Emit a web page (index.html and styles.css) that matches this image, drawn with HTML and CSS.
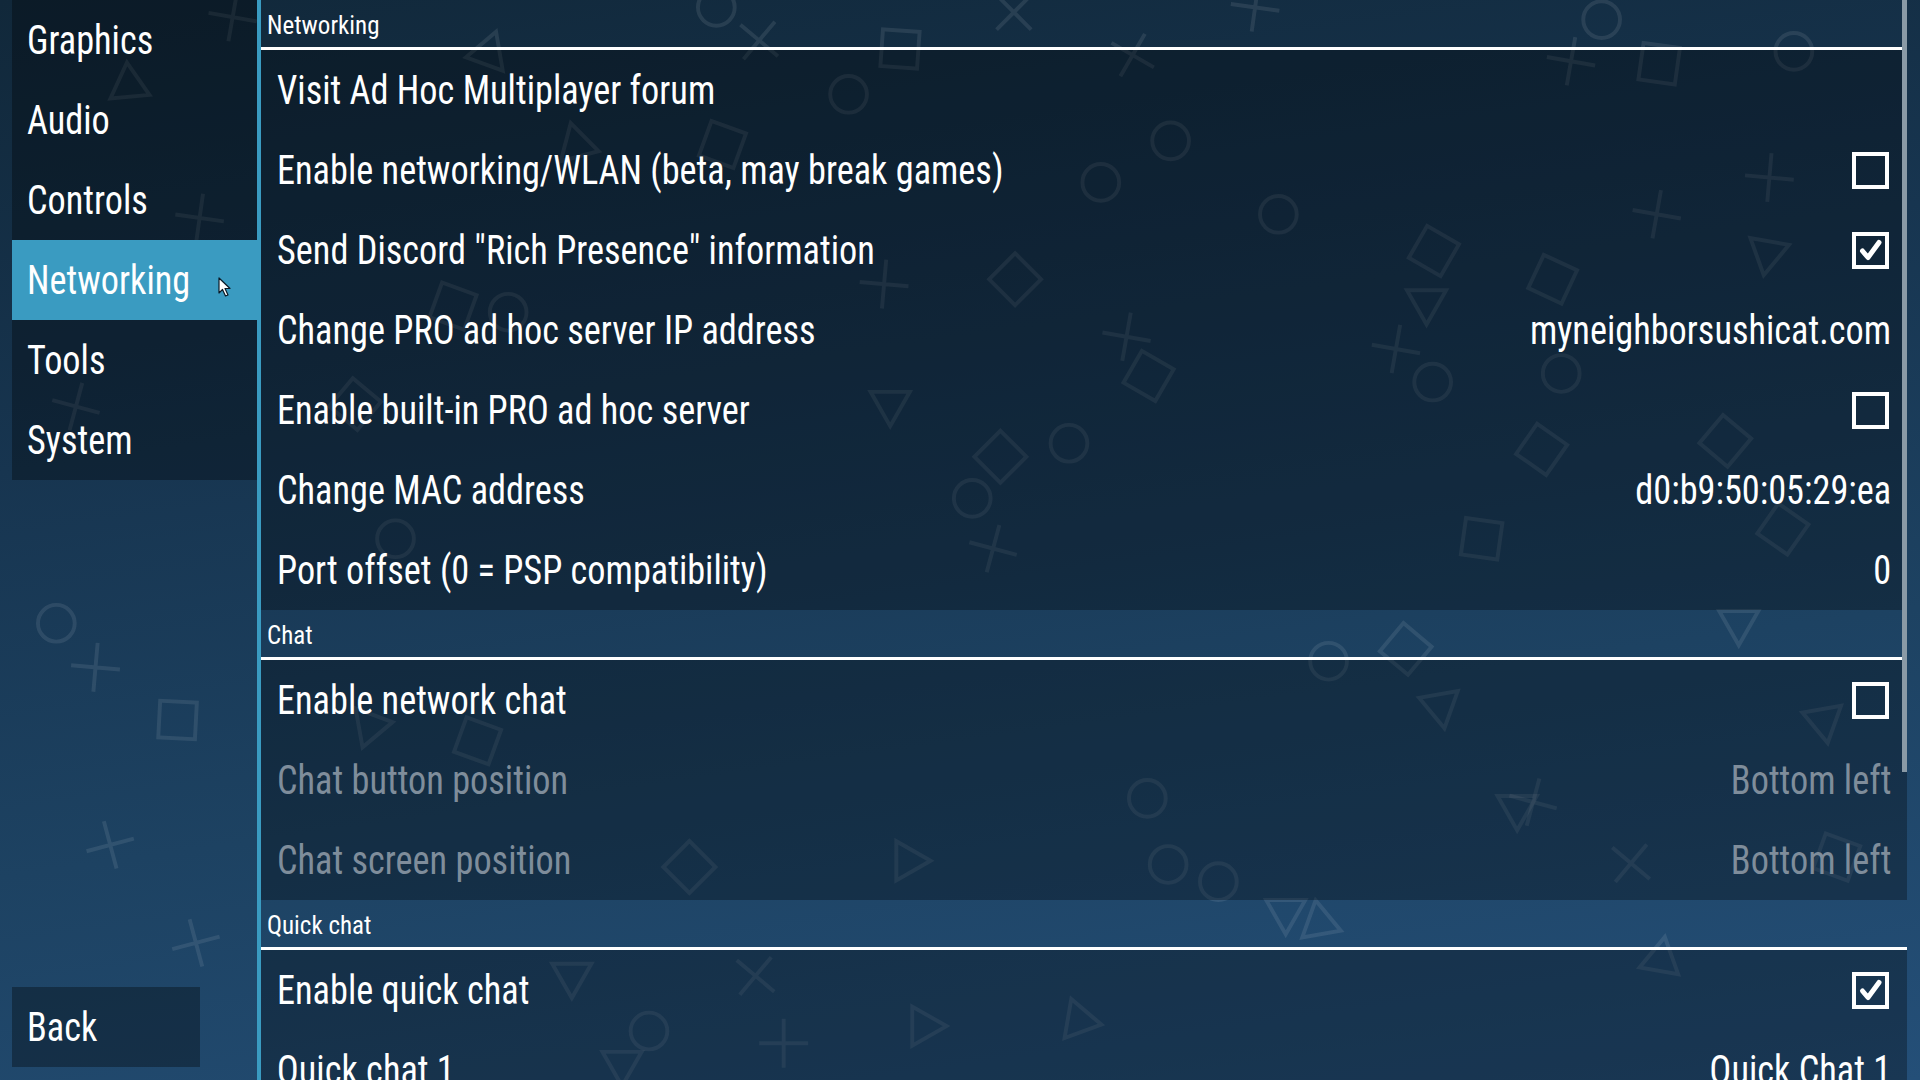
FILE: index.html
```html
<!DOCTYPE html>
<html lang="en">
<head>
    <meta charset="UTF-8">
    <meta name="viewport" content="width=device-width, initial-scale=1.0">
    <title>Settings - Networking</title>
    <link rel="stylesheet" href="styles.css">
</head>
<body>
    <!-- background symbols, coords in a 1568x882 space -->
    <svg class="bg-symbols" viewBox="0 0 1568 882">
        <defs>
            <circle id="s-circle" r="15"/>
            <path id="s-cross" d="M-20 0H20M0-20V20"/>
            <rect id="s-square" x="-15" y="-15" width="30" height="30"/>
            <path id="s-tri" d="M0-15L16 13H-16Z"/>
        </defs>
        <g class="sym">
            <use href="#s-cross" transform="translate(190,14) rotate(10)"/>
            <use href="#s-tri" transform="translate(105,66) rotate(-5)"/>
            <use href="#s-circle" transform="translate(585,6)"/>
            <use href="#s-cross" transform="translate(620,33) rotate(40)"/>
            <use href="#s-square" transform="translate(735,40) rotate(4)"/>
            <use href="#s-cross" transform="translate(828,10) rotate(45)"/>
            <use href="#s-cross" transform="translate(925,45) rotate(30)"/>
            <use href="#s-cross" transform="translate(1025,6) rotate(8)"/>
            <use href="#s-circle" transform="translate(1308,16)"/>
            <use href="#s-cross" transform="translate(1283,50) rotate(10)"/>
            <use href="#s-square" transform="translate(1355,52) rotate(8)"/>
            <use href="#s-circle" transform="translate(1465,42)"/>
            <use href="#s-tri" transform="translate(400,40) rotate(20)"/>
            <use href="#s-circle" transform="translate(693,77)"/>
            <use href="#s-tri" transform="translate(470,115) rotate(-15)"/>
            <use href="#s-square" transform="translate(590,118) rotate(20)"/>
            <use href="#s-circle" transform="translate(956,115)"/>
            <use href="#s-circle" transform="translate(899,149)"/>
            <use href="#s-circle" transform="translate(1044,175)"/>
            <use href="#s-cross" transform="translate(1445,145) rotate(5)"/>
            <use href="#s-cross" transform="translate(1353,175) rotate(10)"/>
            <use href="#s-cross" transform="translate(163,178) rotate(8)"/>
            <use href="#s-square" transform="translate(1171,205) rotate(30)"/>
            <use href="#s-tri" transform="translate(1443,210) rotate(190)"/>
            <use href="#s-tri" transform="translate(1165,250) rotate(180)"/>
            <use href="#s-square" transform="translate(1268,228) rotate(25)"/>
            <use href="#s-square" transform="translate(829,228) rotate(45)"/>
            <use href="#s-cross" transform="translate(722,232) rotate(5)"/>
            <use href="#s-square" transform="translate(370,250) rotate(20)"/>
            <use href="#s-circle" transform="translate(415,255)"/>
            <use href="#s-cross" transform="translate(920,275) rotate(10)"/>
            <use href="#s-square" transform="translate(938,307) rotate(30)"/>
            <use href="#s-cross" transform="translate(1140,285) rotate(10)"/>
            <use href="#s-circle" transform="translate(1170,312)"/>
            <use href="#s-circle" transform="translate(1275,305)"/>
            <use href="#s-cross" transform="translate(62,332) rotate(15)"/>
            <use href="#s-square" transform="translate(290,330) rotate(40)"/>
            <use href="#s-tri" transform="translate(727,333) rotate(180)"/>
            <use href="#s-circle" transform="translate(873,362)"/>
            <use href="#s-square" transform="translate(817,373) rotate(45)"/>
            <use href="#s-square" transform="translate(1409,360) rotate(40)"/>
            <use href="#s-square" transform="translate(1259,367) rotate(35)"/>
            <use href="#s-circle" transform="translate(794,407)"/>
            <use href="#s-cross" transform="translate(811,448) rotate(15)"/>
            <use href="#s-square" transform="translate(1210,440) rotate(8)"/>
            <use href="#s-square" transform="translate(1456,432) rotate(35)"/>
            <use href="#s-circle" transform="translate(323,440)"/>
            <use href="#s-tri" transform="translate(1420,512) rotate(180)"/>
            <use href="#s-circle" transform="translate(46,509)"/>
            <use href="#s-cross" transform="translate(78,545) rotate(5)"/>
            <use href="#s-square" transform="translate(145,588) rotate(3)"/>
            <use href="#s-cross" transform="translate(90,690) rotate(-15)"/>
            <use href="#s-cross" transform="translate(160,770) rotate(-15)"/>
            <use href="#s-square" transform="translate(1148,530) rotate(40)"/>
            <use href="#s-circle" transform="translate(1085,540)"/>
            <use href="#s-tri" transform="translate(1177,580) rotate(170)"/>
            <use href="#s-tri" transform="translate(1490,592) rotate(170)"/>
            <use href="#s-tri" transform="translate(300,590) rotate(-40)"/>
            <use href="#s-square" transform="translate(390,605) rotate(20)"/>
            <use href="#s-circle" transform="translate(937,652)"/>
            <use href="#s-tri" transform="translate(1239,663) rotate(180)"/>
            <use href="#s-square" transform="translate(563,708) rotate(45)"/>
            <use href="#s-tri" transform="translate(745,703) rotate(90)"/>
            <use href="#s-circle" transform="translate(954,706)"/>
            <use href="#s-circle" transform="translate(995,720)"/>
            <use href="#s-cross" transform="translate(1332,705) rotate(40)"/>
            <use href="#s-cross" transform="translate(1252,655) rotate(15)"/>
            <use href="#s-tri" transform="translate(1050,748) rotate(180)"/>
            <use href="#s-tri" transform="translate(1077,750) rotate(-10)"/>
            <use href="#s-tri" transform="translate(1357,780) rotate(10)"/>
            <use href="#s-tri" transform="translate(467,800) rotate(180)"/>
            <use href="#s-cross" transform="translate(617,797) rotate(40)"/>
            <use href="#s-tri" transform="translate(758,838) rotate(90)"/>
            <use href="#s-circle" transform="translate(530,842)"/>
            <use href="#s-tri" transform="translate(880,830) rotate(-20)"/>
            <use href="#s-cross" transform="translate(640,852) rotate(0)"/>
            <use href="#s-tri" transform="translate(508,872) rotate(180)"/>
            <use href="#s-square" transform="translate(1500,700) rotate(20)"/>
        </g>
    </svg>

    <div class="app">
        <nav class="sidebar">
            <div class="nav-list">
                <div class="nav-item"><span class="txt">Graphics</span></div>
                <div class="nav-item"><span class="txt">Audio</span></div>
                <div class="nav-item"><span class="txt">Controls</span></div>
                <div class="nav-item active"><span class="txt">Networking</span>
                    <svg class="cursor" width="14" height="20" viewBox="0 0 14 20">
                        <path d="M1 1V16L4.5 12.5L7.5 19L10 18L7 11.5H12Z" fill="#fff" stroke="#0b1a26" stroke-width="1.2" stroke-linejoin="round"/>
                    </svg>
                </div>
                <div class="nav-item"><span class="txt">Tools</span></div>
                <div class="nav-item"><span class="txt">System</span></div>
            </div>
            <div class="nav-back"><span class="txt">Back</span></div>
        </nav>

        <main class="settings">
            <div class="section-head">Networking</div>
            <div class="section-body">
                <div class="row"><span class="txt">Visit Ad Hoc Multiplayer forum</span></div>
                <div class="row"><span class="txt">Enable networking/WLAN (beta, may break games)</span>
                    <svg class="check" viewBox="0 0 37 37"><rect x="2" y="2" width="33" height="33"/></svg>
                </div>
                <div class="row"><span class="txt">Send Discord "Rich Presence" information</span>
                    <svg class="check" viewBox="0 0 37 37"><rect x="2" y="2" width="33" height="33"/><path class="tick" d="M10.5 19L16 25.5L27 10.5"/></svg>
                </div>
                <div class="row"><span class="txt">Change PRO ad hoc server IP address</span><span class="txt value">myneighborsushicat.com</span></div>
                <div class="row"><span class="txt">Enable built-in PRO ad hoc server</span>
                    <svg class="check" viewBox="0 0 37 37"><rect x="2" y="2" width="33" height="33"/></svg>
                </div>
                <div class="row"><span class="txt">Change MAC address</span><span class="txt value">d0:b9:50:05:29:ea</span></div>
                <div class="row"><span class="txt">Port offset (0 = PSP compatibility)</span><span class="txt value">0</span></div>
            </div>

            <div class="section-head">Chat</div>
            <div class="section-body">
                <div class="row"><span class="txt">Enable network chat</span>
                    <svg class="check" viewBox="0 0 37 37"><rect x="2" y="2" width="33" height="33"/></svg>
                </div>
                <div class="row disabled"><span class="txt">Chat button position</span><span class="txt value">Bottom left</span></div>
                <div class="row disabled"><span class="txt">Chat screen position</span><span class="txt value">Bottom left</span></div>
            </div>

            <div class="section-head">Quick chat</div>
            <div class="section-body">
                <div class="row"><span class="txt">Enable quick chat</span>
                    <svg class="check" viewBox="0 0 37 37"><rect x="2" y="2" width="33" height="33"/><path class="tick" d="M10.5 19L16 25.5L27 10.5"/></svg>
                </div>
                <div class="row"><span class="txt">Quick chat 1</span><span class="txt value">Quick Chat 1</span></div>
            </div>

            <div class="scrollbar"></div>
        </main>
    </div>
</body>
</html>
```

FILE: styles.css
```css
body { margin: 0; width: 1920px; height: 1080px; overflow: hidden; position: relative; color: #fff;
  font-family: "Roboto Condensed", Roboto, sans-serif;
  background: linear-gradient(172deg, #11283a 0%, #173550 35%, #1d4262 65%, #244f78 100%); }

.bg-symbols { position: absolute; left: 0; top: 0; width: 1920px; height: 1080px; }
.sym use { fill: none; stroke: rgba(255, 255, 255, 0.09); stroke-width: 3.2; }

/* Roboto only ships in normal width here, so narrow the glyphs by hand */
.txt { display: inline-block; white-space: nowrap; font-size: 41px; transform: scaleX(0.885); transform-origin: left center; }
.txt.value { transform-origin: right center; }

.app { position: relative; display: flex; height: 1080px; }

.sidebar { width: 245px; padding-left: 12px; border-right: 4px solid #3a9bc1; display: flex; flex-direction: column; }
.nav-list { background: rgba(0, 0, 0, 0.32); }
.nav-item { height: 80px; display: flex; align-items: center; padding-left: 15px; position: relative; }
.nav-item.active { background: #3a9bc1; }
.cursor { position: absolute; left: 206px; top: 37px; }
.nav-back { margin-top: auto; margin-bottom: 13px; width: 188px; height: 80px; box-sizing: border-box; padding-left: 15px;
  display: flex; align-items: center; background: rgba(0, 0, 0, 0.33); }

.settings { width: 1646px; position: relative; }
.section-head { height: 50px; border-bottom: 3px solid #fff; padding-left: 6px; padding-top: 3px; box-sizing: border-box;
  display: flex; align-items: center; font-size: 25px; }
.section-body { background: rgba(0, 0, 0, 0.3); }
.row { height: 80px; display: flex; align-items: center; justify-content: space-between; padding: 0 16px; }
.row.disabled { color: #7f8d9b; }
.check { width: 37px; height: 37px; margin-right: 2px; }
.check rect { fill: none; stroke: #fff; stroke-width: 4; }
.check .tick { fill: none; stroke: #fff; stroke-width: 5; stroke-linecap: round; stroke-linejoin: round; }

.scrollbar { position: absolute; right: 0; top: 0; width: 5px; height: 772px; background: #8a9aa6; }
```
